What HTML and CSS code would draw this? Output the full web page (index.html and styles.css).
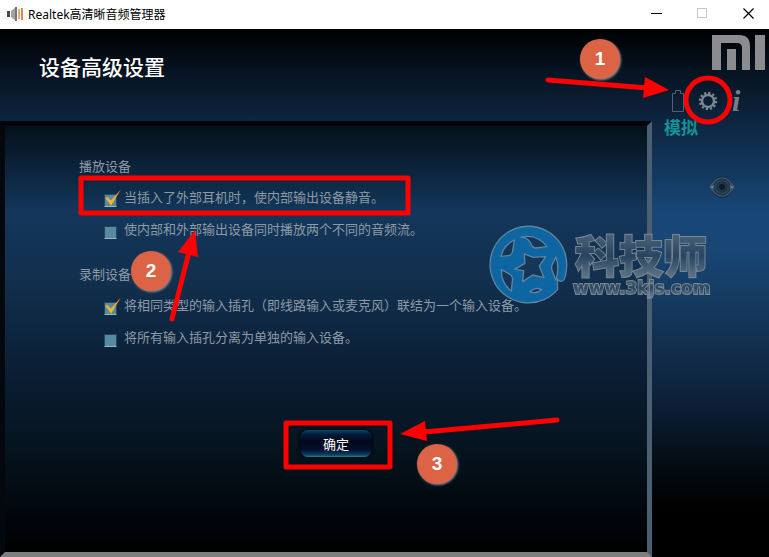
FILE: index.html
```html
<!DOCTYPE html>
<html lang="zh-CN">
<head>
  <meta charset="UTF-8" />
  <meta name="viewport" content="width=device-width, initial-scale=1.0"/>
  <title>Realtek高清晰音频管理器</title>
  <link rel="stylesheet" href="styles.css">
</head>
<body>
  <header class="titlebar">
    <svg class="app-icon" width="18" height="16" viewBox="0 0 18 16" aria-hidden="true">
      <path d="M1 5h3v6H1z" fill="#4a4a4a"/>
      <path d="M5 5l5-4v14l-5-4z" fill="#a3a3a3"/>
      <path d="M9 1h2v14H9z" fill="#777"/>
      <path d="M13 3v10" stroke="#e8a878" stroke-width="2"/>
      <path d="M16 2v12" stroke="#dc8850" stroke-width="2"/>
    </svg>
    <span class="app-name">Realtek高清晰音频管理器</span>
    <div class="window-controls">
      <button type="button" aria-label="最小化">
        <svg width="11" height="11" viewBox="0 0 11 11"><path d="M0 5.5h11" stroke="#000"/></svg>
      </button>
      <button type="button" aria-label="最大化" disabled>
        <svg width="11" height="11" viewBox="0 0 11 11"><path d="M.5.5h9v9h-9z" fill="none" stroke="#c4c4c4"/></svg>
      </button>
      <button type="button" aria-label="关闭">
        <svg width="11" height="11" viewBox="0 0 11 11"><path d="M.5.5l10 10m0-10l-10 10" stroke="#000" stroke-width="1.2"/></svg>
      </button>
    </div>
  </header>

  <div class="app">
    <main class="main">
      <h1>设备高级设置</h1>
      <form class="panel">
        <fieldset>
          <legend>播放设备</legend>
          <label><input type="checkbox" checked>当插入了外部耳机时，使内部输出设备静音。</label>
          <label><input type="checkbox">使内部和外部输出设备同时播放两个不同的音频流。</label>
        </fieldset>
        <fieldset>
          <legend>录制设备</legend>
          <label><input type="checkbox" checked>将相同类型的输入插孔（即线路输入或麦克风）联结为一个输入设备。</label>
          <label><input type="checkbox">将所有输入插孔分离为单独的输入设备。</label>
        </fieldset>
        <button type="button" class="btn-ok">确定</button>
      </form>
    </main>

    <aside class="sidebar">
      <svg class="brand" width="53" height="35" viewBox="0 0 53 35" role="img" aria-label="MI">
        <path d="M0 0h27q11 0 11 11v24h-8V13q0-5-5-5H9v27H0z" fill="#8b8c8f"/>
        <path d="M15 14h9v21h-9zM43 0h10v35H43z" fill="#8b8c8f"/>
      </svg>
      <div class="tools">
        <button type="button" aria-label="电源管理">
          <svg width="12" height="22" viewBox="0 0 12 22"><path d="M.5 3.500h3v-3h5v3h3v18H.5z" fill="none" stroke="#536170"/></svg>
        </button>
        <button type="button" aria-label="设置">
          <svg width="20" height="20" viewBox="-10 -10 20 20">
            <circle r="6" fill="none" stroke="#7f8790" stroke-width="2.400"/>
            <circle r="8" fill="none" stroke="#7f8790" stroke-width="2.400" stroke-dasharray="2.200 1.989"/>
          </svg>
        </button>
        <button type="button" class="info" aria-label="信息">i</button>
      </div>
      <h2>模拟</h2>
      <button type="button" class="jack" aria-label="模拟插孔">
        <svg width="26" height="24" viewBox="0 0 26 24">
          <circle cx="13" cy="12" r="11" fill="#16344f"/>
          <path d="M1 12Q6 3 13 3t12 9Q20 21 13 21T1 12z" fill="#2f4a62" stroke="#4a6279"/>
          <path d="M1 12l4-2v4zM25 12l-4-2v4z" fill="#6c8598"/>
          <circle cx="13" cy="12" r="8" fill="#2c4052" stroke="#1b2f43"/>
          <circle cx="13" cy="12" r="5" fill="#24384b" stroke="#182c40"/>
          <circle cx="13" cy="12" r="3" fill="#0b1826"/>
        </svg>
      </button>
    </aside>
  </div>

  <svg class="overlay" width="769" height="557" viewBox="0 0 769 557">
    <defs>
      <linearGradient id="steel" x1="0" y1="0" x2="0" y2="1">
        <stop offset="0" stop-color="#5c7084"/>
        <stop offset=".5" stop-color="#2a4560"/>
        <stop offset="1" stop-color="#7b8c9b"/>
      </linearGradient>
    </defs>

    <!-- site watermark -->
    <g class="watermark">
      <g transform="translate(485 220) scale(.3333)" stroke="#6189a6" stroke-width="4" stroke-linejoin="round">
        <path d="M218 208A115 115 0 1 1 244 150Q241 184 229 184Q219 184 217 176z" fill="#0d69a6"/>
        <g fill="#173759">
          <path d="M48 109Q56 76 88 60L83 94Q79 107 69 107z"/>
          <path d="M108 52Q155 40 186 80L152 84Q142 83 136 68Q128 52 108 52z"/>
          <path d="M49 149L75 163Q85 170 82 184L79 213Q48 189 49 149z"/>
          <path d="M134 215L148 207Q158 203 170 209Q154 223 134 215z"/>
          <path d="M213 111Q224 142 213 181L201 151Q197 141 202 133z"/>
          <path d="M118 102L145 112L182 110L163 138L177 173L143 165L113 185L116 152L89 148L120 130z"/>
        </g>
      </g>
      <text class="mark-name" x="575" y="273">科技师</text>
      <text class="mark-url" x="573" y="294">www.3kjs.com</text>
    </g>

    <!-- walkthrough marks -->
    <g class="marks">
      <rect x="81" y="178" width="327" height="35"/>
      <rect x="286" y="423" width="104" height="44"/>
      <circle cx="708" cy="100" r="22"/>
      <path d="M548 80L648 88M172 319L189 252M557 420L424 432"/>
    </g>
    <path fill="#f00" d="M669 90L643 98L645 77zM195 230L198 257L178 252zM400 434L425 421L427 441z"/>
    <g class="badges">
      <circle cx="600" cy="59" r="20"/>
      <circle cx="151" cy="271" r="20"/>
      <circle cx="437" cy="464" r="20"/>
      <text x="600" y="65">1</text>
      <text x="151" y="277">2</text>
      <text x="437" y="470">3</text>
    </g>
  </svg>
</body>
</html>
```

FILE: styles.css
```css
:root {
  --text: #8d9aa6;
  --teal: #149296;
  --mark: #ff0000;
  --badge: #dc6346;
}

* {
  box-sizing: border-box;
}

body {
  margin: 0;
  min-height: 100vh;
  display: flex;
  flex-direction: column;
  position: relative;
  overflow: hidden;
  font-family: "Noto Sans", "Noto Sans CJK SC", sans-serif;
  font-size: 13px;
  color: var(--text);
}

button {
  padding: 0;
  border: 0;
  background: none;
  color: inherit;
  font: inherit;
  cursor: pointer;
}

svg {
  display: block;
}

.titlebar {
  display: flex;
  align-items: center;
  height: 29px;
  padding: 0 0 2px 6px;
  background: #fff;
  color: #000;
  font-size: 12px;
}

.app-icon {
  margin-right: 4px;
}

.window-controls {
  display: flex;
  align-self: stretch;
  margin-left: auto;
  margin-right: -2px;
}

.window-controls button {
  width: 46px;
  display: grid;
  place-items: center;
}

.app {
  flex: 1;
  display: flex;
  background: linear-gradient(#000 0, #06121f 40px, #0d2540 92px, #184777 185px, #184675 220px, #12304f 312px, #0b1c33 385px, #040f18 425px, #000 480px);
}

.main {
  flex: 1;
  display: flex;
  flex-direction: column;
}

h1 {
  margin: 0;
  padding: 22px 39px 0;
  height: 92px;
  color: #fff;
  font-size: 21px;
  font-weight: 500;
  line-height: 32px;
}

.panel {
  flex: 1;
  display: flex;
  flex-direction: column;
  gap: 20px;
  padding: 30px 74px 0;
  border: 5px solid;
  border-color: #02060b #4b5f72 #7d7e80 #03080f;
  background: linear-gradient(#04101a 0, #13365a 85px, #12304f 150px, #0a1d33 250px, #05131d 325px, #01060c 390px, #000 100%);
}

fieldset {
  display: flex;
  flex-direction: column;
  min-width: 0;
  margin: 0;
  padding: 4px 0 0 25px;
  border: 0;
}

legend {
  margin-left: -25px;
  padding: 0;
  line-height: 20px;
}

label {
  display: flex;
  align-items: center;
  gap: 7px;
  height: 32px;
  white-space: nowrap;
}

input[type="checkbox"] {
  appearance: none;
  position: relative;
  width: 13px;
  height: 13px;
  margin: 8px 0 0;
  border: 1px solid #23485e;
  border-bottom-color: #a3b4bb;
  background: #568aa2;
}

input[type="checkbox"]:checked::after {
  content: "";
  position: absolute;
  left: 0;
  top: -5px;
  width: 16px;
  height: 16px;
  background: linear-gradient(#ee8e28, #f3c52f);
  clip-path: polygon(0 52%, 18% 47%, 36% 68%, 100% 0, 38% 100%);
}

.btn-ok {
  align-self: center;
  width: 72px;
  height: 27px;
  margin: 58px 0 0 20px;
  border-radius: 8px;
  background: linear-gradient(#0b4a68 0, #061d3d 4px, #02071b 11px, #04102c 20px, #0b4362 25px, #278299 27px);
  box-shadow: 0 0 2px 1px #01060c;
  color: #fff;
}

.sidebar {
  width: 117px;
  display: flex;
  flex-direction: column;
  padding: 6px 4px 0 12px;
}

.brand {
  align-self: flex-end;
}

.tools {
  display: flex;
  align-items: center;
  gap: 14px;
  height: 30px;
  margin: 16px 0 0 8px;
}

.info {
  color: #747f8a;
  font-family: "Liberation Serif", serif;
  font-size: 30px;
  font-style: italic;
  font-weight: bold;
  line-height: 30px;
}

h2 {
  margin: 0;
  color: var(--teal);
  font-size: 17px;
  font-weight: 700;
  line-height: 24px;
}

.jack {
  align-self: center;
  margin: 35px 0 0 15px;
}

.overlay {
  position: absolute;
  left: 0;
  top: 0;
  pointer-events: none;
}

.watermark {
  opacity: 0.95;
}

.mark-name,
.mark-url {
  fill: url(#steel);
  stroke: #7b8994;
  paint-order: stroke;
  stroke-width: 2px;
}

.mark-name {
  font-size: 44px;
  font-weight: 900;
}

.mark-url {
  font-family: "DejaVu Sans", sans-serif;
  font-size: 17px;
  font-weight: bold;
}

.marks {
  fill: none;
  stroke: var(--mark);
  stroke-width: 5px;
  stroke-linecap: round;
  stroke-linejoin: round;
}

.badges circle {
  fill: var(--badge);
  filter: drop-shadow(1px 1px 1px #8b9296);
}

.badges text {
  fill: #fff;
  font-family: "Liberation Sans", sans-serif;
  font-size: 19px;
  font-weight: bold;
  text-anchor: middle;
}
```
